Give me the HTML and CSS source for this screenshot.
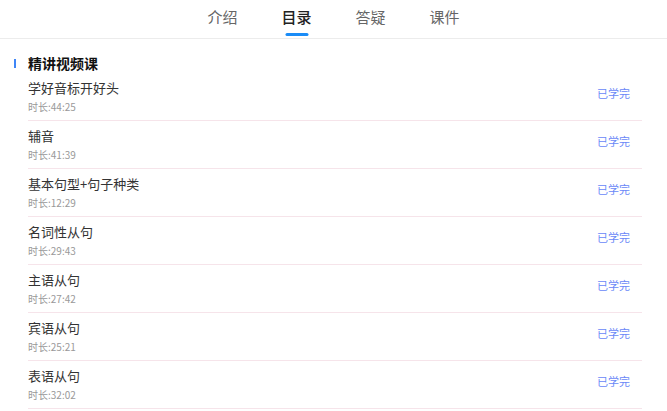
FILE: index.html
```html
<!DOCTYPE html>
<html lang="zh">
<head>
<meta charset="utf-8">
<link rel="stylesheet" href="styles.css">
</head>
<body>
<nav class="tabs">
  <div class="tab">介绍</div>
  <div class="tab active">目录</div>
  <div class="tab">答疑</div>
  <div class="tab">课件</div>
</nav>
<section class="chapter">
  <h2 class="chapter-title">精讲视频课</h2>
  <ul class="lessons">
    <li class="lesson"><div class="info"><div class="name">学好音标开好头</div><div class="dur">时长:44:25</div></div><span class="status">已学完</span></li>
    <li class="lesson"><div class="info"><div class="name">辅音</div><div class="dur">时长:41:39</div></div><span class="status">已学完</span></li>
    <li class="lesson"><div class="info"><div class="name">基本句型+句子种类</div><div class="dur">时长:12:29</div></div><span class="status">已学完</span></li>
    <li class="lesson"><div class="info"><div class="name">名词性从句</div><div class="dur">时长:29:43</div></div><span class="status">已学完</span></li>
    <li class="lesson"><div class="info"><div class="name">主语从句</div><div class="dur">时长:27:42</div></div><span class="status">已学完</span></li>
    <li class="lesson"><div class="info"><div class="name">宾语从句</div><div class="dur">时长:25:21</div></div><span class="status">已学完</span></li>
    <li class="lesson"><div class="info"><div class="name">表语从句</div><div class="dur">时长:32:02</div></div><span class="status">已学完</span></li>
  </ul>
</section>
</body>
</html>
```
FILE: styles.css
```css
* { box-sizing: border-box; }
html, body { margin: 0; padding: 0; background: #fff; }
body {
  font-family: "Noto Sans CJK SC", "Noto Sans", sans-serif;
  color: #333;
  overflow: hidden;
}
.tabs {
  display: flex;
  justify-content: center;
  gap: 44px;
  height: 39px;
  border-bottom: 1px solid #ececec;
}
.tab {
  position: relative;
  font-size: 15px;
  line-height: 20px;
  padding-top: 7px;
  color: #666;
  width: 30px;
  text-align: center;
}
.tab.active {
  color: #222;
  font-weight: 500;
}
.tab.active::after {
  content: "";
  position: absolute;
  left: 50%;
  transform: translateX(-50%);
  top: 33px;
  width: 23px;
  height: 3px;
  border-radius: 2px;
  background: #1a8cf7;
}
.chapter { padding: 14px 25px 0 14px; }
.chapter-title {
  margin: 0;
  display: flex;
  align-items: center;
  font-size: 14px;
  line-height: 20px;
  font-weight: 700;
  color: #111;
}
.chapter-title::before {
  content: "";
  width: 2px;
  height: 9px;
  background: #3f86f7;
  margin-right: 12px;
}
.lessons {
  list-style: none;
  margin: 0 0 0 14px;
  padding: 0;
}
.lesson {
  display: flex;
  align-items: center;
  justify-content: space-between;
  padding: 6px 12px 6px 0;
  border-bottom: 1px solid #f6e4ea;
}
.name {
  font-size: 13px;
  line-height: 18px;
  color: #333;
}
.dur {
  margin-top: 3px;
  font-size: 10px;
  line-height: 14px;
  color: #999;
}
.status {
  font-size: 11px;
  color: #6a88f7;
  margin-top: -8px;
}
```
